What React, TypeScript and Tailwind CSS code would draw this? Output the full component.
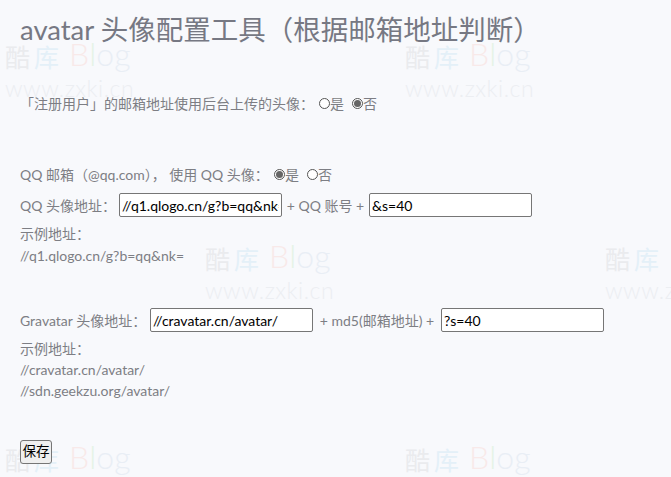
import React from "react";

const font = { fontFamily: 'Lato, "Noto Sans CJK SC", sans-serif' };

// faint site watermark tiled behind the page
const Watermark = ({ left, top }: { left: number; top: number }) => (
  <div
    className="pointer-events-none absolute select-none"
    style={{ left, top }}
  >
    <div className="flex items-end leading-none">
      <span className="text-[25px] text-[#eaebee]">酷</span>
      <span className="ml-[4px] text-[25px] text-[#e4f0f8]">库</span>
      <span className="ml-[10px] text-[32px] font-light text-[#f8e9e9]">B</span>
      <span className="text-[32px] font-light text-[#e6f3e6]">l</span>
      <span className="text-[32px] font-light text-[#e9eef5]">og</span>
    </div>
    <div className="mt-[7px] text-[23px] font-light leading-none tracking-[0.5px] text-[#eceef2]">
      www.zxki.cn
    </div>
  </div>
);

const Radio = ({ checked }: { checked?: boolean }) => (
  <span className="inline-flex h-[11px] w-[11px] items-center justify-center rounded-full border border-[#555] bg-white">
    {checked && <span className="h-[7px] w-[7px] rounded-full bg-[#666]" />}
  </span>
);

const RadioPair = ({ yes }: { yes: boolean }) => (
  <span className="inline-flex items-center">
    <Radio checked={yes} />
    <span>是</span>
    <span className="ml-[8px] inline-flex">
      <Radio checked={!yes} />
    </span>
    <span>否</span>
  </span>
);

const Field = ({ value }: { value: string }) => (
  <input
    readOnly
    value={value}
    className="h-[24px] w-[163px] shrink-0 rounded-[2px] border border-[#767676] bg-white px-[2px] text-[14px] text-black outline-none"
    style={font}
  />
);

export default function App() {
  return (
    <div
      className="relative h-[477px] overflow-hidden bg-[#f8f9fc] text-[14px] text-[#7d7e84]"
      style={font}
    >
      <Watermark left={5} top={38} />
      <Watermark left={405} top={38} />
      <Watermark left={205} top={240} />
      <Watermark left={605} top={240} />
      <Watermark left={5} top={441} />
      <Watermark left={405} top={441} />

      <div className="relative pl-[20px]">
        <h1 className="mt-[12px] text-[27.5px] leading-[36px] font-normal whitespace-nowrap text-[#767883]">
          avatar 头像配置工具（根据邮箱地址判断）
        </h1>

        <div className="mt-[45px] flex items-center leading-[21px] whitespace-nowrap">
          <span>「注册用户」的邮箱地址使用后台上传的头像：</span>
          <span className="ml-[5px] inline-flex">
            <RadioPair yes={false} />
          </span>
        </div>

        <div className="mt-[50px] flex items-center leading-[21px] whitespace-nowrap">
          <span>QQ 邮箱（@qq.com）， 使用 QQ 头像：</span>
          <span className="ml-[5px] inline-flex">
            <RadioPair yes={true} />
          </span>
        </div>

        <div className="mt-[8px] flex items-center whitespace-nowrap">
          <span className="w-[99px] shrink-0">QQ 头像地址：</span>
          <Field value="//q1.qlogo.cn/g?b=qq&nk=" />
          <span className="w-[87px] shrink-0 text-center">+ QQ 账号 +</span>
          <Field value="&s=40" />
        </div>

        <div className="mt-[6px] leading-[22px]">
          <div>示例地址：</div>
          <div>//q1.qlogo.cn/g?b=qq&amp;nk=</div>
        </div>

        <div className="mt-[41px] flex items-center whitespace-nowrap">
          <span className="w-[130px] shrink-0">Gravatar 头像地址：</span>
          <Field value="//cravatar.cn/avatar/" />
          <span className="w-[128px] shrink-0 text-center">+ md5(邮箱地址) +</span>
          <Field value="?s=40" />
        </div>

        <div className="mt-[6px] leading-[21px]">
          <div>示例地址：</div>
          <div>//cravatar.cn/avatar/</div>
          <div>//sdn.geekzu.org/avatar/</div>
        </div>

        <button className="mt-[39px] h-[24px] w-[32px] rounded-[3px] border border-[#767676] bg-[#efefef] text-[13.5px] leading-none text-black">
          保存
        </button>
      </div>
    </div>
  );
}
